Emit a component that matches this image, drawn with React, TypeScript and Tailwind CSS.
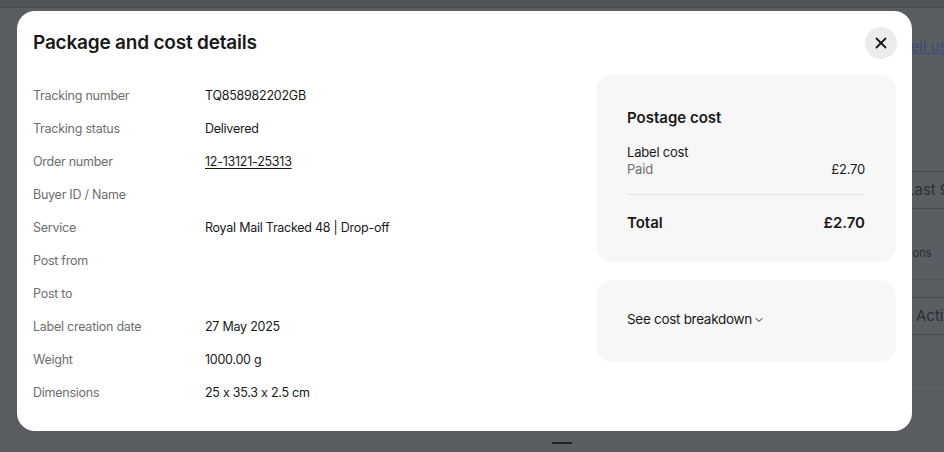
import { X, ChevronDown } from 'lucide-react'

const rows: { label: string; value?: string; link?: boolean }[] = [
  { label: 'Tracking number', value: 'TQ858982202GB' },
  { label: 'Tracking status', value: 'Delivered' },
  { label: 'Order number', value: '12-13121-25313', link: true },
  { label: 'Buyer ID / Name' },
  { label: 'Service', value: 'Royal Mail Tracked 48 | Drop-off' },
  { label: 'Post from' },
  { label: 'Post to' },
  { label: 'Label creation date', value: '27 May 2025' },
  { label: 'Weight', value: '1000.00 g' },
  { label: 'Dimensions', value: '25 x 35.3 x 2.5 cm' },
]

function BackdropPage() {
  // page behind the dimmed overlay, only the right edge shows
  return (
    <div className="w-full h-full flex flex-col text-[#2a2e32] whitespace-nowrap">
      <div className="h-[8px] bg-[#505458] border-b border-[#45494d] shrink-0" />
      <div className="flex flex-col ml-[902px] mt-[30px] text-[15px]">
        <span className="text-[#3d4a78] underline leading-[18px]">Tell us</span>
        <div className="mt-[115px] h-[38px] border-y border-[#474b4f] flex items-center pl-[4px] text-[15px]">
          Last 9
        </div>
        <div className="h-[71px] border-b border-[#505458] pt-[37px] pl-[8px] text-[11px] leading-[14px]">
          ions
        </div>
        <div className="mt-[17px] h-[38px] border-y border-[#474b4f] flex items-center pl-[14px] text-[15px]">
          Acti
        </div>
        <div className="h-[50px] border-b border-[#55595d]" />
      </div>
      <div className="mt-auto mb-[8px] ml-[552px] w-[20px] h-[2px] bg-[#1f2327]" />
    </div>
  )
}

export default function App() {
  return (
    <div className="relative w-[944px] h-[452px] overflow-hidden bg-[#5a5e62] font-['Inter','Liberation_Sans',sans-serif] [font-feature-settings:'calt'_0]">
      <BackdropPage />
      <div className="absolute left-[17px] top-[11px] w-[895px] h-[420px] bg-white rounded-[18px] flex flex-col">
        <div className="flex items-center justify-between pl-[16px] pr-[15px] pt-[16px]">
          <h2 className="text-[19px] font-semibold text-[#191919] tracking-[-0.2px]">Package and cost details</h2>
          <button className="w-[32px] h-[32px] rounded-full bg-[#ececec] flex items-center justify-center">
            <X size={18} strokeWidth={2.4} className="text-[#191919]" />
          </button>
        </div>
        <div className="flex pl-[16px] pr-[16px] mt-[16px] gap-[16px]">
          <div className="flex-1 flex flex-col pt-[5px]">
            {rows.map((r) => (
              <div key={r.label} className="flex h-[33px] items-center text-[12.5px] tracking-[-0.25px]">
                <span className="w-[172px] text-[#6e6e6e]">{r.label}</span>
                {r.value && (
                  <span className={r.link ? 'text-[#191919] underline underline-offset-2' : 'text-[#191919]'}>
                    {r.value}
                  </span>
                )}
              </div>
            ))}
          </div>
          <div className="w-[300px] flex flex-col gap-[18px]">
            <div className="bg-[#f7f7f7] rounded-[16px] px-[31px] pt-[32px] pb-[28px] flex flex-col">
              <h3 className="text-[15px] font-semibold text-[#191919]">Postage cost</h3>
              <div className="mt-[14px] text-[13px] text-[#191919] leading-[17px] tracking-[-0.2px]">Label cost</div>
              <div className="flex justify-between text-[13px] leading-[17px] tracking-[-0.2px]">
                <span className="text-[#6e6e6e]">Paid</span>
                <span className="text-[#191919]">£2.70</span>
              </div>
              <div className="mt-[16px] border-t border-[#e2e2e2]" />
              <div className="mt-[17px] flex justify-between text-[15px] font-semibold text-[#191919]">
                <span>Total</span>
                <span>£2.70</span>
              </div>
            </div>
            <div className="bg-[#f7f7f7] rounded-[16px] h-[82px] px-[31px] flex items-center">
              <button className="flex items-center text-[13.5px] tracking-[-0.3px] text-[#191919] -mt-[3px]">
                See cost breakdown
                <ChevronDown size={12} strokeWidth={2} className="ml-[1px] mt-[1px]" />
              </button>
            </div>
          </div>
        </div>
      </div>
    </div>
  )
}
